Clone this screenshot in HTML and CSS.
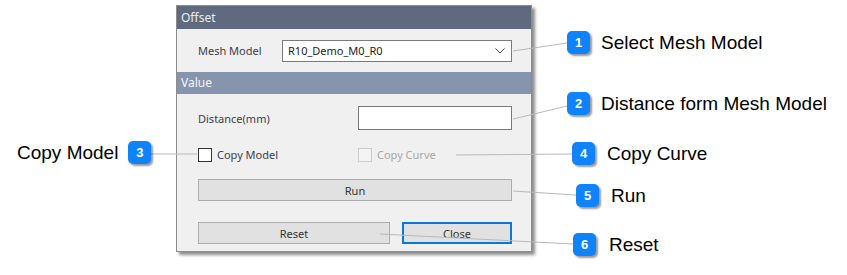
FILE: index.html
```html
<!DOCTYPE html>
<html lang="en">
<head>
<meta charset="UTF-8">
<meta name="viewport" content="width=device-width, initial-scale=1.0">
<title>Offset</title>
<link rel="stylesheet" href="styles.css">
</head>
<body>
<div class="stage">
    <div class="dialog">
        <div class="titlebar">Offset</div>
        <div class="mesh-section">
            <span class="label">Mesh Model</span>
            <div class="select">
                <span>R10_Demo_M0_R0</span>
                <svg class="chevron" width="10" height="6" viewBox="0 0 10 6"><polyline points="0.5,0.5 5,5 9.5,0.5" fill="none" stroke="#444" stroke-width="1"/></svg>
            </div>
        </div>
        <div class="groupbar">Value</div>
        <div class="value-section">
            <div class="row distance-row">
                <span class="label">Distance(mm)</span>
                <div class="input"></div>
            </div>
            <div class="row check-row">
                <label class="check"><span class="box"></span>Copy Model</label>
                <label class="check disabled"><span class="box"></span>Copy Curve</label>
            </div>
            <div class="button run">Run</div>
            <div class="button-row">
                <div class="button reset">Reset</div>
                <div class="button close">Close</div>
            </div>
        </div>
    </div>

    <!-- leader lines -->
    <svg class="leaders" width="847" height="275">
        <line x1="513" y1="51" x2="567" y2="43"/>
        <line x1="513" y1="119" x2="567" y2="106"/>
        <line x1="150" y1="154" x2="197" y2="154"/>
        <line x1="456" y1="155" x2="572" y2="154"/>
        <line x1="513" y1="191" x2="576" y2="195"/>
        <line x1="380" y1="234" x2="573" y2="244"/>
    </svg>

    <div class="callout c1"><span class="badge">1</span>Select Mesh Model</div>
    <div class="callout c2"><span class="badge">2</span>Distance form Mesh Model</div>
    <div class="callout c3">Copy Model<span class="badge">3</span></div>
    <div class="callout c4"><span class="badge">4</span>Copy Curve</div>
    <div class="callout c5"><span class="badge">5</span>Run</div>
    <div class="callout c6"><span class="badge">6</span>Reset</div>
</div>
</body>
</html>
```

FILE: styles.css
```css
body, html {
    margin: 0;
    padding: 0;
    background: #fff;
}

.stage {
    position: relative;
    width: 847px;
    height: 275px;
    overflow: hidden;
    font-family: "Noto Sans", sans-serif;
}

.dialog {
    margin: 5px 0 0 176px;
    width: 356px;
    height: 247px;
    box-sizing: border-box;
    border: 1px solid #8c8c8c;
    background: #f0f0f0;
    box-shadow: 3px 3px 3px rgba(0, 0, 0, 0.45);
    font-size: 11px;
    color: #3a3f4a;
}

.titlebar {
    height: 23px;
    line-height: 23px;
    padding-left: 4px;
    background: #5f6a7e;
    color: #e9edf3;
    font-size: 12px;
}

.mesh-section {
    display: flex;
    align-items: center;
    height: 43px;
    padding: 0 19px 0 21px;
}

.mesh-section .label {
    width: 84px;
}

.select {
    flex: 1;
    height: 22px;
    box-sizing: border-box;
    border: 1px solid #7a7a7a;
    background: #fff;
    display: flex;
    align-items: center;
    justify-content: space-between;
    padding: 0 6px 0 5px;
    color: #222;
}

.groupbar {
    height: 22px;
    line-height: 22px;
    padding-left: 4px;
    background: #8794ad;
    color: #f4f6fa;
    font-size: 12px;
}

.value-section {
    padding: 12px 19px 0 21px;
}

.row {
    display: grid;
    grid-template-columns: 160px 1fr;
    align-items: center;
}

.input {
    height: 24px;
    box-sizing: border-box;
    border: 1px solid #7a7a7a;
    background: #fff;
}

.check-row {
    margin-top: 17px;
    height: 14px;
}

.check {
    display: flex;
    align-items: center;
    gap: 5px;
}

.check .box {
    width: 14px;
    height: 14px;
    box-sizing: border-box;
    border: 1px solid #333;
    background: #fff;
}

.check.disabled {
    color: #a8a8a8;
}

.check.disabled .box {
    border-color: #cccccc;
    background: #f4f4f4;
}

.button {
    height: 22px;
    box-sizing: border-box;
    border: 1px solid #adadad;
    background: #e1e1e1;
    display: flex;
    align-items: center;
    justify-content: center;
    color: #333;
}

.run {
    margin-top: 18px;
}

.button-row {
    display: flex;
    gap: 12px;
    margin-top: 21px;
}

.reset {
    width: 192px;
}

.close {
    flex: 1;
    border: 2px solid #0a78d7;
}

.leaders {
    position: absolute;
    left: 0;
    top: 0;
    pointer-events: none;
}

.leaders line {
    stroke: #b9b9b9;
    stroke-width: 1;
}

.callout {
    position: absolute;
    display: flex;
    align-items: center;
    gap: 11px;
    font-family: "Liberation Sans", Arial, sans-serif;
    font-size: 19px;
    color: #000;
    white-space: nowrap;
}

.badge {
    width: 23px;
    height: 23px;
    border-radius: 5px;
    background: #0f83fb;
    color: #fff;
    font-size: 13px;
    font-weight: bold;
    display: flex;
    align-items: center;
    justify-content: center;
    box-shadow: 2px 2px 2px rgba(0, 0, 0, 0.4);
}

.c1 { left: 567px; top: 31px; }
.c2 { left: 567px; top: 92px; }
.c3 { left: 17px; top: 141px; gap: 10px; }
.c4 { left: 572px; top: 142px; gap: 12px; }
.c5 { left: 576px; top: 184px; gap: 12px; }
.c6 { left: 573px; top: 233px; gap: 13px; }
```
